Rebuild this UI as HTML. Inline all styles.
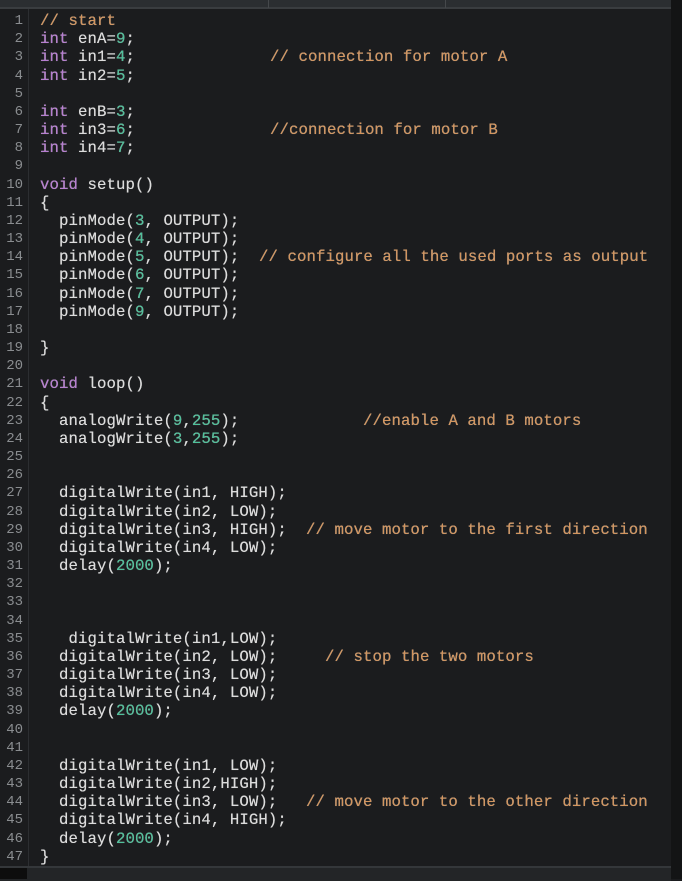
<!DOCTYPE html>
<html><head><meta charset="utf-8"><style>
html,body{margin:0;padding:0;}
body{width:682px;height:879px;background:#1b1c1e;position:relative;overflow:hidden;font-family:"Liberation Mono","Courier New",monospace;}
#top{position:absolute;left:0;top:0;width:671px;height:7px;background:#2b2e31;border-bottom:2px solid #3a3d40;}
.vd{position:absolute;top:0;width:1px;height:8px;background:#45484b;}
#right{position:absolute;right:0;top:0;width:11px;height:879px;background:#131415;}
#gut{position:absolute;left:28px;top:9px;width:1px;height:858px;background:#2c2e31;}
#bot{position:absolute;left:0;top:866px;width:671px;height:13px;background:#232527;border-top:2px solid #34373a;}
#bl{position:absolute;left:0;top:868px;width:27px;height:11px;background:#0d0d0d;}
.ln{position:absolute;left:0;width:23px;text-align:right;color:#8a8d90;font-size:14px;}
.l{position:absolute;left:40px;white-space:pre;color:#dcdcdc;font-size:15.7px;font-weight:normal;letter-spacing:0.08px;text-shadow:0 0 0.4px #dcdcdc;}
.k{color:#b77ed1;}.n{color:#4fc19b;}.c{color:#d3955e;position:absolute;white-space:pre;}
</style></head><body>
<div id="top"></div><div class="vd" style="left:268px"></div><div class="vd" style="left:445px"></div>
<div id="gut"></div><div id="right"></div><div id="bot"></div><div id="bl"></div>
<div id="code"></div>
<script>
var L=[
['<span class="c" style="left:0">// start</span>'],
['<span class="k">int</span> enA=<span class="n">9</span>;'],
['<span class="k">int</span> in1=<span class="n">4</span>;',270,'// connection for motor A'],
['<span class="k">int</span> in2=<span class="n">5</span>;'],
[''],
['<span class="k">int</span> enB=<span class="n">3</span>;'],
['<span class="k">int</span> in3=<span class="n">6</span>;',270,'//connection for motor B'],
['<span class="k">int</span> in4=<span class="n">7</span>;'],
[''],
['<span class="k">void</span> setup()'],
['{'],
['  pinMode(<span class="n">3</span>, OUTPUT);'],
['  pinMode(<span class="n">4</span>, OUTPUT);'],
['  pinMode(<span class="n">5</span>, OUTPUT);',259,'// configure all the used ports as output'],
['  pinMode(<span class="n">6</span>, OUTPUT);'],
['  pinMode(<span class="n">7</span>, OUTPUT);'],
['  pinMode(<span class="n">9</span>, OUTPUT);'],
[''],
['}'],
[''],
['<span class="k">void</span> loop()'],
['{'],
['  analogWrite(<span class="n">9</span>,<span class="n">255</span>);',363,'//enable A and B motors'],
['  analogWrite(<span class="n">3</span>,<span class="n">255</span>);'],
[''],[''],
['  digitalWrite(in1, HIGH);'],
['  digitalWrite(in2, LOW);'],
['  digitalWrite(in3, HIGH);',306,'// move motor to the first direction'],
['  digitalWrite(in4, LOW);'],
['  delay(<span class="n">2000</span>);'],
[''],[''],[''],
['   digitalWrite(in1,LOW);'],
['  digitalWrite(in2, LOW);',325,'// stop the two motors'],
['  digitalWrite(in3, LOW);'],
['  digitalWrite(in4, LOW);'],
['  delay(<span class="n">2000</span>);'],
[''],[''],
['  digitalWrite(in1, LOW);'],
['  digitalWrite(in2,HIGH);'],
['  digitalWrite(in3, LOW);',306,'// move motor to the other direction'],
['  digitalWrite(in4, HIGH);'],
['  delay(<span class="n">2000</span>);'],
['}']];
var h='';
for(var i=0;i<L.length;i++){var y=12+i*18.17;
h+='<div class="ln" style="top:'+(y+1)+'px">'+(i+1)+'</div>';
var s='<div class="l" style="top:'+y+'px;'+(i==0?'width:200px;':'')+'">'+L[i][0];
if(L[i][1])s+='<span class="c" style="left:'+(L[i][1]-40)+'px">'+L[i][2]+'</span>';
h+=s+'</div>';}
document.getElementById('code').innerHTML=h;
</script>
</body></html>
